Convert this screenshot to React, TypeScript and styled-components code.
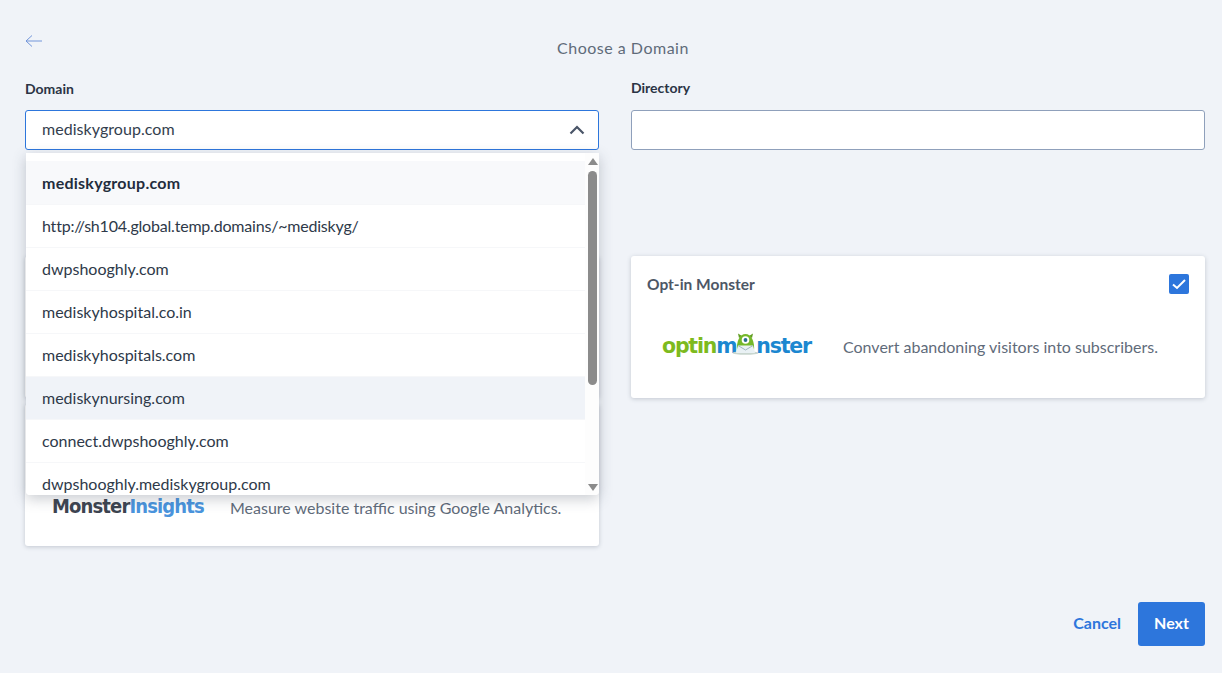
import styled, { createGlobalStyle } from 'styled-components'

const DOMAINS = [
  'mediskygroup.com',
  'http://sh104.global.temp.domains/~mediskyg/',
  'dwpshooghly.com',
  'mediskyhospital.co.in',
  'mediskyhospitals.com',
  'mediskynursing.com',
  'connect.dwpshooghly.com',
  'dwpshooghly.mediskygroup.com',
]

const BLUE = '#2d76dc'
const FONT = `'Lato', 'Open Sans', sans-serif`

function OptinLogo() {
  return (
    <OptinWrap>
      <OptinGreen>optin</OptinGreen>
      <OptinBlue>m</OptinBlue>
      <MonsterFace viewBox="0 0 27 23" width="27" height="23">
        <ellipse cx="13.5" cy="21" rx="13" ry="1.8" fill="#c9d6cf" />
        <path d="M7 6 L6 1.5 L10 4 Z M20 6 L21 1.5 L17 4 Z" fill="#5f9c1f" />
        <path d="M5 19 C4 9 8 2 13.5 2 C19 2 23 9 22 19 Z" fill="#75b82a" />
        <circle cx="13.5" cy="8" r="3.8" fill="#fff" />
        <circle cx="13.5" cy="8" r="1.9" fill="#2b6e8f" />
        <path d="M6 13.5 L21 13.5 L23 21 L4 21 Z" fill="#e9f1f4" />
        <path d="M6 13.5 L13.5 18 L21 13.5" fill="none" stroke="#9fb6c0" strokeWidth="1" />
      </MonsterFace>
      <OptinBlue>nster</OptinBlue>
    </OptinWrap>
  )
}

export default function App() {
  return (
    <>
      <GlobalStyle />
      <Page>
        <TopBar>
          <BackArrow viewBox="0 0 18 14" width="18" height="14">
            <path d="M17 7 H1 M7 1.5 L1 7 L7 12.5" fill="none" stroke="#7396da" strokeWidth="1" />
          </BackArrow>
          <Title>Choose a Domain</Title>
        </TopBar>

        <Columns>
          <Field>
            <Label $nudge={1}>Domain</Label>
            <SelectBox>
              <span>mediskygroup.com</span>
              <svg viewBox="0 0 16 10" width="16" height="10">
                <path d="M1.5 8.5 L8 2 L14.5 8.5" fill="none" stroke="#4a5568" strokeWidth="2.2" />
              </svg>
            </SelectBox>
            <Dropdown>
              <OptionList>
                {DOMAINS.map((d, i) => (
                  <Option key={d} $selected={i === 0} $hover={i === 5} $tight={i === 1}>{d}</Option>
                ))}
              </OptionList>
              <Scrollbar>
                <ArrowUp />
                <Thumb />
                <ArrowDown />
              </Scrollbar>
            </Dropdown>
          </Field>
          <Field>
            <Label>Directory</Label>
            <DirectoryInput />
          </Field>
        </Columns>

        <Columns $top={106}>
          <CardStack>
            <Card />
            <Card>
              <CardBody $top={75}>
                <InsightsLogo>Monster<em>Insights</em></InsightsLogo>
                <CardText>Measure website traffic using Google Analytics.</CardText>
              </CardBody>
            </Card>
          </CardStack>
          <div>
            <Card>
              <CardHead>
                <CardTitle>Opt-in Monster</CardTitle>
                <Check>
                  <svg viewBox="0 0 20 20" width="20" height="20">
                    <path d="M4 10.5 L8 14 L16 6" fill="none" stroke="#fff" strokeWidth="2" />
                  </svg>
                </Check>
              </CardHead>
              <CardBody $top={38}>
                <OptinLogo />
                <CardText>Convert abandoning visitors into subscribers.</CardText>
              </CardBody>
            </Card>
          </div>
        </Columns>

        <Footer>
          <CancelBtn>Cancel</CancelBtn>
          <NextBtn>Next</NextBtn>
        </Footer>
      </Page>
    </>
  )
}

const GlobalStyle = createGlobalStyle`
  html, body { margin: 0; padding: 0; background: #f0f3f8; }
  body { font-family: ${FONT}; }
`

const Page = styled.div`
  width: 1222px;
  height: 673px;
  box-sizing: border-box;
  padding: 33px 17px 0 25px;
  overflow: hidden;
`

const TopBar = styled.div`
  position: relative;
  height: 48px;
`

const BackArrow = styled.svg`
  position: absolute;
  left: 0;
  top: 1px;
`

const Title = styled.div`
  text-align: center;
  font-size: 16px;
  line-height: 20px;
  padding: 5px 0 0 16px;
  color: #5f6b7a;
  letter-spacing: 0.5px;
`

const Columns = styled.div<{ $top?: number }>`
  display: grid;
  grid-template-columns: 574px 574px;
  column-gap: 32px;
  margin-top: ${p => p.$top ?? 0}px;
`

const Field = styled.div`
  position: relative;
`

const Label = styled.div<{ $nudge?: number }>`
  font-size: 14px;
  font-weight: 700;
  line-height: 14px;
  height: 18px;
  margin-bottom: 11px;
  padding-top: ${p => p.$nudge ?? 0}px;
  box-sizing: border-box;
  color: #2b3445;
`

const SelectBox = styled.div`
  height: 40px;
  box-sizing: border-box;
  background: #fff;
  border: 1px solid ${BLUE};
  border-radius: 3px;
  display: flex;
  align-items: center;
  justify-content: space-between;
  padding: 0 13px 0 16px;
  font-size: 16px;
  letter-spacing: 0.05px;
  color: #333e4e;
  span {
    padding-bottom: 3px;
  }
`

const Dropdown = styled.div`
  position: absolute;
  left: 1px;
  right: 0;
  top: 72px;
  height: 342px;
  z-index: 5;
  display: flex;
  background: #fff;
  border-radius: 0 0 4px 4px;
  box-shadow: 0 4px 14px rgba(60, 72, 90, 0.28);
  overflow: hidden;
`

const OptionList = styled.div`
  flex: 1;
  padding-top: 8px;
  overflow: hidden;
`

const Option = styled.div<{ $selected?: boolean; $hover?: boolean; $tight?: boolean }>`
  height: ${p => (p.$selected ? 44 : 43)}px;
  box-sizing: border-box;
  padding: 0 0 ${p => (p.$selected ? 1 : 2)}px 16px;
  display: flex;
  align-items: center;
  font-size: 16px;
  font-weight: ${p => (p.$selected ? 700 : 400)};
  letter-spacing: ${p => (p.$selected ? '0.25px' : p.$tight ? '-0.2px' : '0')};
  color: ${p => (p.$selected ? '#232d3d' : '#2e3949')};
  background: ${p => (p.$selected ? '#f8f9fb' : p.$hover ? '#f0f3f8' : '#fff')};
  border-bottom: 1px solid #f6f7f9;
`

const Scrollbar = styled.div`
  width: 14px;
  background: #fdfdfd;
  display: flex;
  flex-direction: column;
  align-items: center;
  padding: 5px 0 4px 1px;
  box-sizing: border-box;
`

const ArrowUp = styled.div`
  width: 0;
  height: 0;
  border-left: 5px solid transparent;
  border-right: 5px solid transparent;
  border-bottom: 7px solid #8b8b8b;
`

const ArrowDown = styled.div`
  width: 0;
  height: 0;
  border-left: 5px solid transparent;
  border-right: 5px solid transparent;
  border-top: 7px solid #8b8b8b;
  margin-top: auto;
`

const Thumb = styled.div`
  width: 9px;
  height: 214px;
  margin-top: 6px;
  border-radius: 5px;
  background: #8b8b8b;
`

const DirectoryInput = styled.div`
  height: 40px;
  box-sizing: border-box;
  background: #fff;
  border: 1px solid #8fa0bb;
  border-radius: 3px;
`

const CardStack = styled.div`
  display: flex;
  flex-direction: column;
  gap: 6px;
`

const Card = styled.div`
  height: 142px;
  box-sizing: border-box;
  background: #fff;
  border-radius: 3px;
  padding: 16px;
  box-shadow: 0 1px 4px rgba(60, 72, 90, 0.25);
`

const CardHead = styled.div`
  display: flex;
  justify-content: space-between;
  align-items: center;
  height: 24px;
`

const CardTitle = styled.div`
  font-size: 15.5px;
  font-weight: 700;
  color: #4d5766;
`

const Check = styled.div`
  width: 20px;
  height: 20px;
  border-radius: 2px;
  background: ${BLUE};
  display: flex;
`

const CardBody = styled.div<{ $top: number }>`
  display: flex;
  align-items: center;
  height: 24px;
  margin-top: ${p => p.$top}px;
`

const CardText = styled.div`
  font-size: 16px;
  color: #5f6b7a;
`

const OptinWrap = styled.div`
  width: 196px;
  flex-shrink: 0;
  padding-left: 15px;
  box-sizing: border-box;
  display: flex;
  align-items: center;
  font-family: 'DejaVu Sans', sans-serif;
  font-weight: 700;
  font-size: 20.5px;
  letter-spacing: -1.2px;
  line-height: 24px;
`

const OptinGreen = styled.span`
  color: #7dba1e;
`

const OptinBlue = styled.span`
  color: #1b87d0;
`

const MonsterFace = styled.svg`
  margin: -5px -3px 0 -4px;
`

const InsightsLogo = styled.div`
  width: 189px;
  flex-shrink: 0;
  padding: 0 0 2px 11px;
  box-sizing: border-box;
  font-family: 'DejaVu Sans Condensed', 'DejaVu Sans', sans-serif;
  font-weight: 700;
  font-size: 20px;
  letter-spacing: -0.87px;
  color: #3d4450;
  em {
    font-style: normal;
    color: #4a94dd;
  }
`

const Footer = styled.div`
  display: flex;
  justify-content: flex-end;
  align-items: center;
  gap: 16px;
  margin-top: 56px;
`

const CancelBtn = styled.button`
  border: 0;
  background: none;
  padding: 0 1px 3px 0;
  font-family: ${FONT};
  font-size: 16px;
  font-weight: 700;
  color: ${BLUE};
`

const NextBtn = styled.button`
  width: 67px;
  height: 44px;
  border: 0;
  border-radius: 3px;
  padding: 0 0 4px;
  background: ${BLUE};
  color: #fff;
  font-family: ${FONT};
  font-size: 16px;
  font-weight: 700;
`
